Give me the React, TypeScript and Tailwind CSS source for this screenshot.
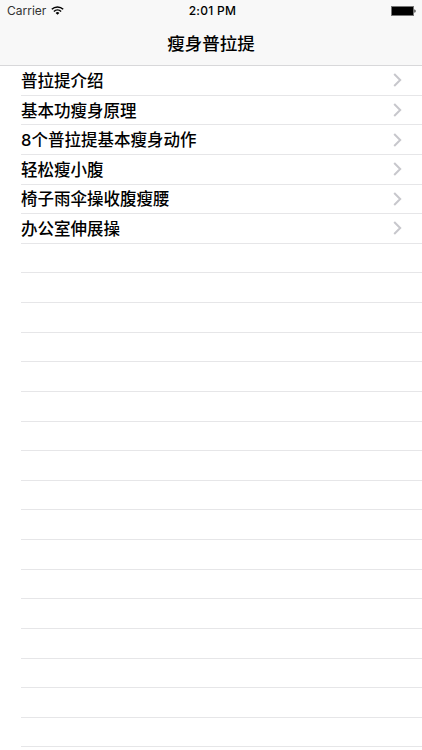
import React from "react";

const lessons = [
  "普拉提介绍",
  "基本功瘦身原理",
  "8个普拉提基本瘦身动作",
  "轻松瘦小腹",
  "椅子雨伞操收腹瘦腰",
  "办公室伸展操",
];

const ROW_COUNT = 24;

const StatusBar = () => {
  return (
    <div className="grid h-[22px] grid-cols-3 items-center pl-[7px] pr-[6px] text-[12px] leading-[22px] text-black">
      <div className="flex items-center gap-[5px]">
        <span className="w-[39px] whitespace-nowrap text-[#333]">Carrier</span>
        <svg width="13" height="9" viewBox="0 0 13 9" fill="none" stroke="#000" strokeWidth="1.5" className="mb-px">
          <path d="M0.8 3.3a8.2 8.2 0 0 1 11.4 0" />
          <path d="M2.9 5.5a5.2 5.2 0 0 1 7.2 0" />
          <path d="M6.5 8.8L4.6 6.9a2.8 2.8 0 0 1 3.8 0z" fill="#000" stroke="none" />
        </svg>
      </div>
      <div className="pl-[2px] text-center font-medium tracking-[0.3px]">2:01 PM</div>
      <div className="flex justify-end">
        <svg width="25" height="10" viewBox="0 0 25 10">
          <rect x="0.5" y="0.5" width="22" height="9" fill="#000" stroke="#777" />
          <path d="M23.4 3.2c1.6.5 1.6 3.1 0 3.6z" fill="#222" />
        </svg>
      </div>
    </div>
  );
};

const App = () => {
  return (
    <div className="h-[750px] overflow-hidden bg-white font-['Inter','Noto_Sans_CJK_SC',sans-serif] text-black">
      <header className="h-[66px] border-b border-[#d8d8da] bg-[#f8f8f8]">
        <StatusBar />
        <h1 className="h-[43px] text-center text-[17.5px] font-medium leading-[43px]">瘦身普拉提</h1>
      </header>
      <ul className="pl-[21px]">
        {Array.from({ length: ROW_COUNT }, (_, i) => (
          <li
            key={i}
            className="flex h-[29.64px] items-center justify-between border-b border-[#e6e6e8] pr-[20px] text-[16.5px] font-medium"
          >
            <span className="pt-[2px]">{lessons[i]}</span>
            {lessons[i] && (
              <svg width="9" height="14" viewBox="0 0 9 14" fill="none" stroke="#c7c7cc" strokeWidth="2">
                <path d="M1.2 1l6 6-6 6" />
              </svg>
            )}
          </li>
        ))}
      </ul>
    </div>
  );
};

export default App;
